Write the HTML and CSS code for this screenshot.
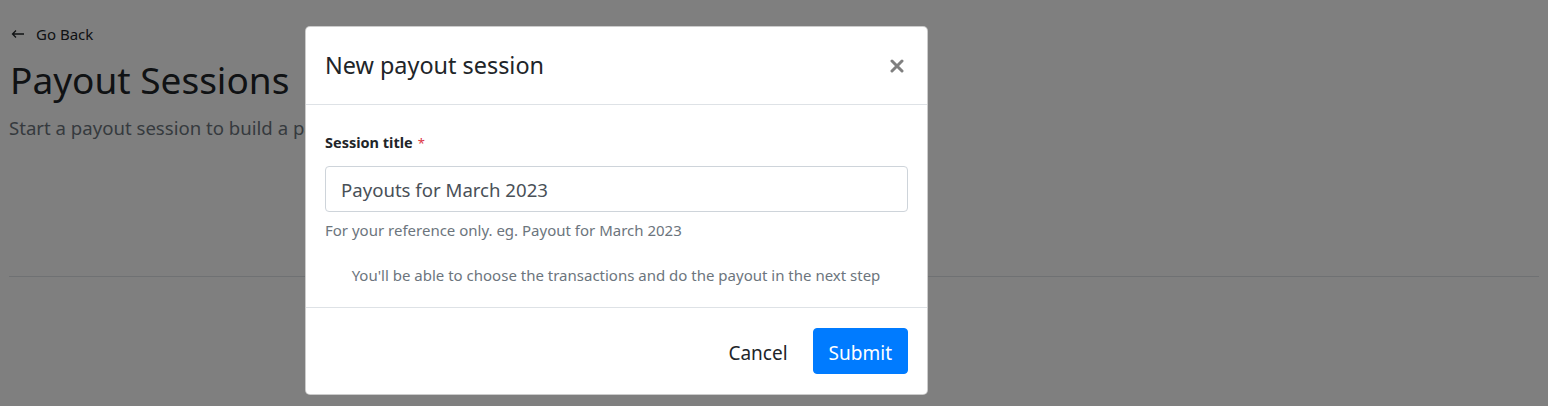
FILE: index.html
```html
<!DOCTYPE html>
<html lang="en">
<head>
<meta charset="utf-8">
<title>Payout Sessions</title>
<link rel="stylesheet" href="styles.css">
</head>
<body>
<div class="page">
  <a class="back" href="#">
    <svg class="back-icon" width="14" height="10" viewBox="0 0 14 10"><path d="M13 5H1.5M5 1.5L1.5 5L5 8.5" fill="none" stroke="#212529" stroke-width="1.3"/></svg>
    <span>Go Back</span>
  </a>
  <h1 class="page-title">Payout Sessions</h1>
  <p class="page-sub">Start a payout session to build a payout batch</p>
  <hr class="page-rule">
</div>

<div class="backdrop"></div>

<div class="modal">
  <div class="modal-header">
    <h5 class="modal-title">New payout session</h5>
    <button class="close" type="button" aria-label="Close">
      <svg width="14" height="14" viewBox="0 0 14 14"><path d="M2 2L12 12M12 2L2 12" stroke="#808080" stroke-width="3" stroke-linecap="round"/></svg>
    </button>
  </div>
  <div class="modal-body">
    <div class="field-label"><span class="label-text">Session title</span><span class="req">*</span></div>
    <input class="field-input" type="text" value="Payouts for March 2023">
    <div class="help">For your reference only. eg. Payout for March 2023</div>
    <p class="info">You'll be able to choose the transactions and do the payout in the next step</p>
  </div>
  <div class="modal-footer">
    <button class="btn btn-link" type="button">Cancel</button>
    <button class="btn btn-primary" type="button">Submit</button>
  </div>
</div>
</body>
</html>
```

FILE: styles.css
```css
* { box-sizing: border-box; }
html, body { margin: 0; padding: 0; }
body {
  width: 1548px;
  height: 406px;
  overflow: hidden;
  background: #fff;
  font-family: "Noto Sans", "Open Sans", sans-serif;
  color: #212529;
  position: relative;
}
.page {
  padding: 23px 9px 0 10px;
}
.back {
  display: flex;
  align-items: center;
  gap: 11px;
  color: #212529;
  text-decoration: none;
  font-size: 15px;
  line-height: 22px;
  padding-left: 1px;
}
.back-icon { display: block; }
.page-title {
  margin: 11px 0 0;
  font-size: 37px;
  font-weight: 400;
  line-height: 48px;
  color: #212529;
}
.page-sub {
  margin: 13px 0 0 -1px;
  font-size: 18.6px;
  line-height: 22px;
  color: #6c757d;
}
.page-rule {
  margin: 137px 0 0 -1px;
  border: 0;
  border-top: 1px solid #dee2e6;
}
.backdrop {
  position: absolute;
  inset: 0;
  background: rgba(0, 0, 0, 0.5);
}
.modal {
  position: absolute;
  left: 305px;
  top: 26px;
  width: 623px;
  background: #fff;
  border: 1px solid rgba(0, 0, 0, 0.2);
  border-radius: 5px;
  display: flex;
  flex-direction: column;
}
.modal-header {
  display: flex;
  align-items: center;
  justify-content: space-between;
  padding: 20px 20px 20px 19px;
  border-bottom: 1px solid #dee2e6;
}
.modal-title {
  margin: 0;
  font-size: 23.4px;
  font-weight: 400;
  line-height: 37px;
  color: #212529;
}
.close {
  border: 0;
  background: none;
  padding: 0;
  margin-right: 3px;
  width: 14px;
  height: 14px;
  display: flex;
  cursor: pointer;
}
.modal-body {
  padding: 27px 20px 21px 19px;
  display: flex;
  flex-direction: column;
}
.field-label {
  display: flex;
  align-items: baseline;
  gap: 5px;
  font-size: 14.5px;
  line-height: 21px;
  font-weight: 700;
  color: #212529;
  margin-bottom: 12px;
}
.req { color: #dc3545; font-weight: 400; font-size: 13px; }
.field-input {
  width: 583px;
  height: 46px;
  flex: 0 0 46px;
  border: 1px solid #ced4da;
  border-radius: 4px;
  padding: 0 15px;
  font-family: inherit;
  font-size: 18.6px;
  color: #495057;
  background: #fff;
  outline: none;
}
.help {
  margin-top: 8px;
  font-size: 15px;
  line-height: 21px;
  color: #6c757d;
}
.info {
  margin: 24px 0 0;
  text-align: center;
  font-size: 15px;
  line-height: 21px;
  color: #6c757d;
}
.modal-footer {
  display: flex;
  justify-content: flex-end;
  align-items: center;
  gap: 9px;
  padding: 20px 19px 20px 20px;
  border-top: 1px solid #dee2e6;
}
.btn {
  font-family: inherit;
  font-size: 19px;
  line-height: 26px;
  height: 46px;
  border: 1px solid transparent;
  border-radius: 4px;
  padding: 3px 15px 0;
  cursor: pointer;
}
.btn-link {
  background: none;
  color: #212529;
}
.btn-primary {
  background: #007bff;
  border-color: #007bff;
  color: #fff;
}
```
